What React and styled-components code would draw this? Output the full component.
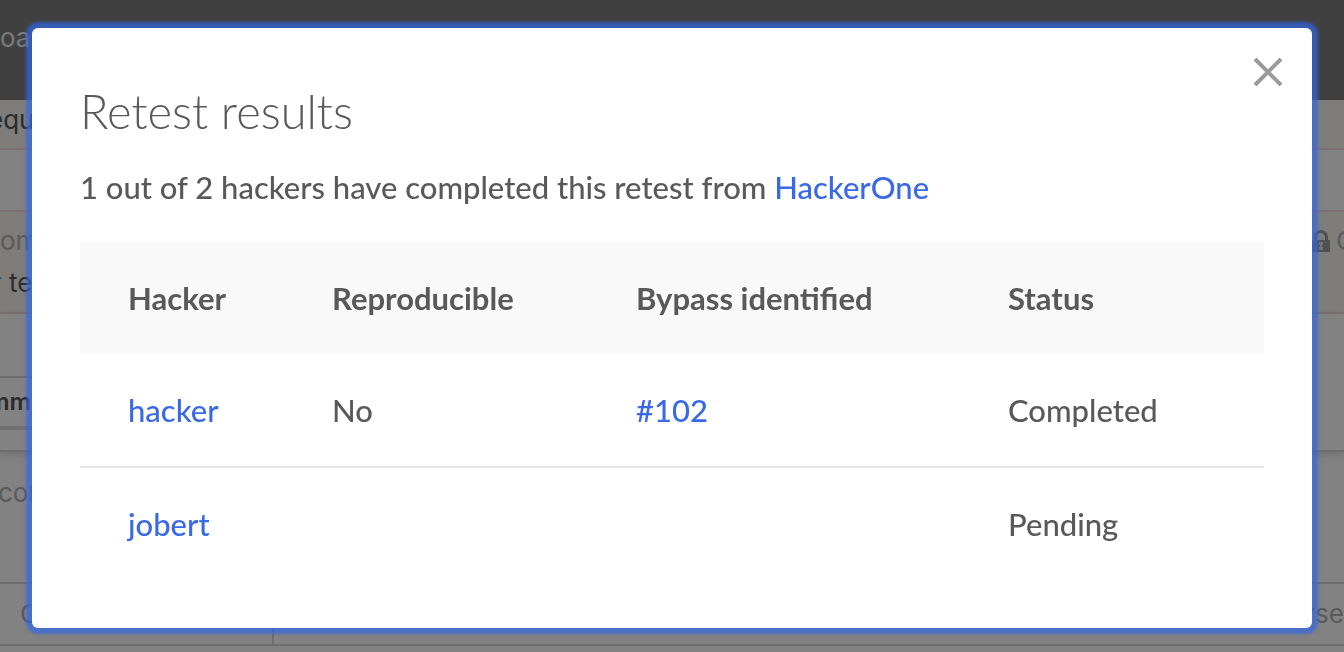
import React from "react";
import styled, { createGlobalStyle } from "styled-components";

const GlobalStyle = createGlobalStyle`
  * { box-sizing: border-box; }
  html, body, #root { height: 100%; }
  body {
    margin: 0;
    overflow: hidden;
    background: #828282;
    color: #595959;
    font-family: Lato, "Open Sans", sans-serif;
  }
`;

const Page = styled.div`
  height: 100%;
  overflow: hidden;
  font-family: Inter, "Liberation Sans", sans-serif;
  font-size: 26px;
  white-space: nowrap;
`;

const TopBar = styled.header`
  height: 100px;
  padding-top: 22px;
  background: #404040;
  color: #7a7a7a;
  line-height: 32px;
`;

const Band = styled.div`
  display: flex;
  flex-direction: column;
  justify-content: center;
  height: ${(p) => p.$height}px;
  background: ${(p) => (p.$warm ? "#7f7d7a" : "#828282")};
  border-bottom: 2px solid ${(p) => (p.$warm || p.$warmLine ? "#7b7170" : "#6d6d6d")};
  box-shadow: ${(p) => (p.$raised ? "0 2px 8px rgba(0, 0, 0, 0.16)" : "none")};
`;

const Notice = styled(Band)`
  padding-bottom: 8px;
`;

const Line = styled.div`
  display: flex;
  justify-content: space-between;
  line-height: 42px;
  color: ${(p) => (p.$dark ? "#2b2b2b" : "#5a5a5a")};
`;

const Clipped = styled.span`
  margin-left: ${(p) => p.$start}px;
`;

const Author = styled.span`
  color: #3b5a80;
`;

const Visibility = styled.span`
  display: flex;
  align-items: center;
  gap: 6px;
  width: 32px;

  svg { flex-shrink: 0; }
`;

const TabCard = styled.div`
  width: 300px;
  height: 54px;
  margin-bottom: 20px;
  border-top: 2px solid #6d6d6d;
  border-bottom: 4px solid #717171;
  color: #2b2b2b;
  font-size: 24px;
  font-weight: 600;
  line-height: 48px;
`;

const Editor = styled(Band)`
  justify-content: flex-end;
`;

const Comment = styled.div`
  height: 132px;
  padding-top: 20px;
  border-bottom: 2px solid #6d6d6d;
`;

const Actions = styled.div`
  display: flex;
  height: 62px;
  border-bottom: 2px solid #6d6d6d;
  color: #5a5a5a;
  line-height: 60px;
`;

const Action = styled.div`
  width: 274px;
  padding-left: 20px;
  border-right: 2px solid #6d6d6d;
`;

const LastAction = styled.div`
  flex: 1;
  text-align: right;
`;

const Overlay = styled.div`
  position: fixed;
  inset: 0;
  padding: 28px 32px 24px;
`;

const Dialog = styled.section`
  display: flex;
  flex-direction: column;
  min-height: 100%;
  padding: 24px 24px 48px 48px;
  border-radius: 6px;
  background: #fff;
  box-shadow: 0 0 3px 6px rgba(48, 103, 228, 0.7);
`;

const CloseButton = styled.button`
  display: flex;
  align-self: flex-end;
  padding: 4px;
  border: 0;
  background: none;
  color: #9b9b9b;
  cursor: pointer;
`;

const Content = styled.div`
  padding-right: 24px;
`;

const Title = styled.h1`
  margin: 0;
  font-size: 47px;
  font-weight: 300;
  line-height: 38px;
`;

const Summary = styled.p`
  margin: 36px 0 34px;
  font-size: 31px;
  line-height: 42px;
  font-weight: 500;
`;

const Link = styled.a`
  color: #3969e7;
  text-decoration: none;
`;

const Table = styled.table`
  width: 100%;
  border-collapse: collapse;
  table-layout: fixed;
  font-size: 31px;
  font-weight: 500;
  line-height: 40px;
  text-align: left;
`;

const Column = styled.col`
  width: ${(p) => p.$width};
`;

const HeadCell = styled.th`
  height: 112px;
  padding: 0 0 0 48px;
  background: #f9f9f9;
  font-weight: 700;
  white-space: nowrap;
`;

const Cell = styled.td`
  height: 113px;
  padding: 0 0 0 48px;
`;

const Row = styled.tr`
  & + & { border-top: 2px solid #e6e6e6; }
`;

const results = [
  { hacker: "hacker", reproducible: "No", bypass: "#102", status: "Completed" },
  { hacker: "jobert", reproducible: "", bypass: "", status: "Pending" },
];

function LockIcon() {
  return (
    <svg width="18" height="24" viewBox="0 0 18 24" aria-hidden="true">
      <path d="M3.5 12V8a5.5 5.5 0 0 1 11 0v4" fill="none" stroke="#505050" strokeWidth="3" />
      <rect x="0" y="11" width="18" height="12" rx="1" fill="#505050" />
      <path d="M7 13h4v3h-1v2h1v3H7v-3h1v-2H7z" fill="#747371" />
    </svg>
  );
}

export default function App() {
  return (
    <>
      <GlobalStyle />
      <Page aria-hidden="true">
        <TopBar>oa</TopBar>
        <Notice $height={50} $warm>
          <Line $dark><Clipped $start={-12}>equ</Clipped></Line>
        </Notice>
        <Band $height={62} $warmLine />
        <Band $height={102} $warm>
          <Line>
            <Clipped $start={0}>om</Clipped>
            <Visibility><LockIcon />O</Visibility>
          </Line>
          <Line $dark>
            <Clipped $start={-8}><Author>r</Author> te</Clipped>
          </Line>
        </Band>
        <Editor $height={138} $raised>
          <TabCard><Clipped $start={-12}>mm</Clipped></TabCard>
        </Editor>
        <Comment>
          <Line><Clipped $start={-2}>cor</Clipped></Line>
        </Comment>
        <Actions>
          <Action>O</Action>
          <LastAction>rse</LastAction>
        </Actions>
      </Page>
      <Overlay>
        <Dialog role="dialog" aria-modal="true" aria-labelledby="retest-title">
          <CloseButton type="button" aria-label="Close">
            <svg width="32" height="32" viewBox="0 0 32 32" fill="none" stroke="currentColor" strokeWidth="4">
              <path d="M3 3l26 26M29 3L3 29" />
            </svg>
          </CloseButton>
          <Content>
            <Title id="retest-title">Retest results</Title>
            <Summary>
              1 out of 2 hackers have completed this retest from <Link href="#hackerone">HackerOne</Link>
            </Summary>
            <Table>
              <colgroup>
                <Column $width="204px" />
                <Column $width="304px" />
                <Column $width="372px" />
                <Column $width="auto" />
              </colgroup>
              <thead>
                <tr>
                  <HeadCell scope="col">Hacker</HeadCell>
                  <HeadCell scope="col">Reproducible</HeadCell>
                  <HeadCell scope="col">Bypass identified</HeadCell>
                  <HeadCell scope="col">Status</HeadCell>
                </tr>
              </thead>
              <tbody>
                {results.map((r) => (
                  <Row key={r.hacker}>
                    <Cell><Link href={`#${r.hacker}`}>{r.hacker}</Link></Cell>
                    <Cell>{r.reproducible}</Cell>
                    <Cell>{r.bypass && <Link href="#report-102">{r.bypass}</Link>}</Cell>
                    <Cell>{r.status}</Cell>
                  </Row>
                ))}
              </tbody>
            </Table>
          </Content>
        </Dialog>
      </Overlay>
    </>
  );
}
